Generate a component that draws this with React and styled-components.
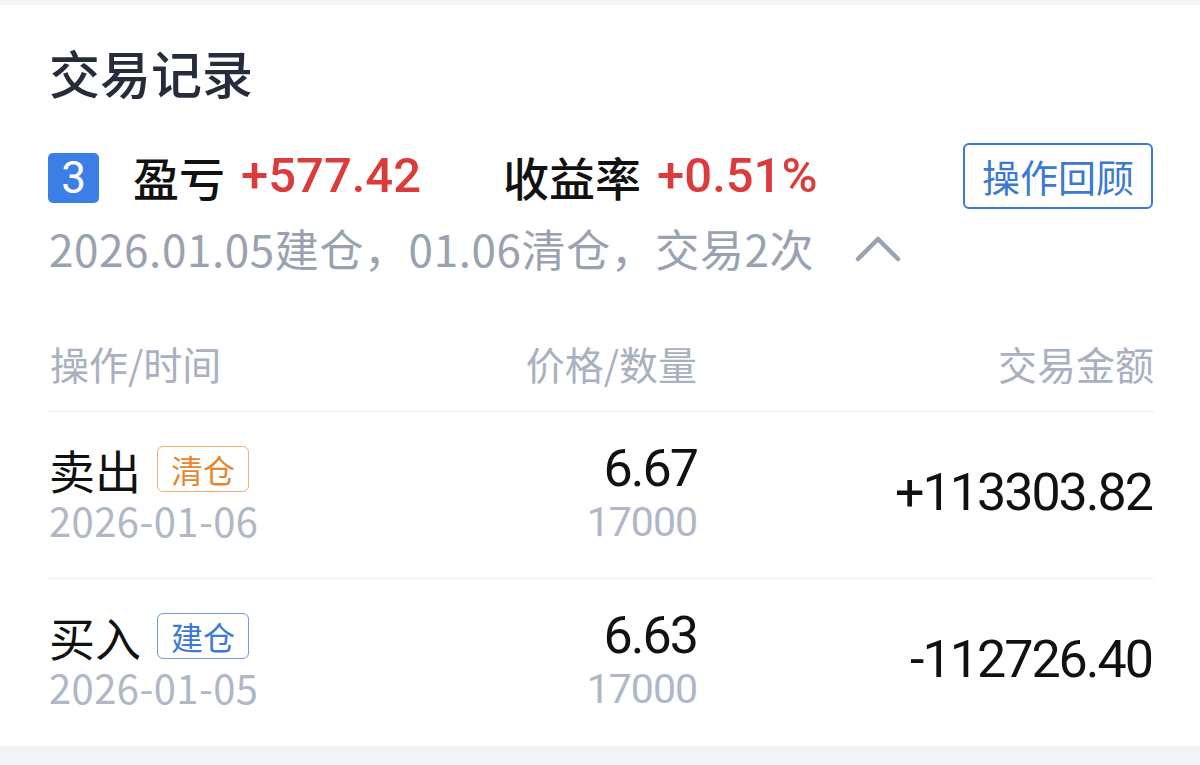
import styled, { createGlobalStyle } from "styled-components";

const GlobalStyle = createGlobalStyle`
  body {
    margin: 0;
    background: #f3f4f8;
    font-family: "Noto Sans CJK SC", "Noto Sans", sans-serif;
  }
`;

const Page = styled.div`
  padding-top: 5px;
  height: 765px;
  box-sizing: border-box;
`;

const Card = styled.div`
  background: #fff;
  height: 741px;
  box-sizing: border-box;
  padding: 41px 46px 0 48px;
`;

const Title = styled.h1`
  margin: 0 0 0 1px;
  font-size: 51px;
  line-height: 52px;
  font-weight: 500;
  color: #262c3b;
`;

const SummaryRow = styled.div`
  display: flex;
  align-items: center;
  height: 66px;
  margin-top: 45px;
`;

const Badge = styled.div`
  width: 51px;
  height: 50px;
  border-radius: 5px;
  background: #3b7fe6;
  color: #fff;
  display: flex;
  align-items: center;
  justify-content: center;
  font-family: Roboto, sans-serif;
  font-size: 44px;
  line-height: 1;
  margin-top: 4px;
`;

const Label = styled.span`
  font-size: 46px;
  line-height: 46px;
  font-weight: 500;
  color: #111;
  margin-left: ${(p) => p.$gap}px;
`;

const RedValue = styled.span`
  font-family: Roboto, "Noto Sans CJK SC", sans-serif;
  font-size: 49px;
  line-height: 48px;
  font-weight: 500;
  color: #dc3b3c;
  margin-left: 16px;
`;

const ReviewButton = styled.button`
  margin-left: auto;
  margin-right: 1px;
  height: 66px;
  padding: 0 17px;
  border: 2px solid #3b79d2;
  border-radius: 6px;
  background: #fff;
  color: #3b79d2;
  font-family: "Noto Sans CJK SC", sans-serif;
  font-size: 38px;
  line-height: 1;
`;

const DateLine = styled.div`
  display: flex;
  align-items: center;
  gap: 40px;
  margin-top: 17px;
  margin-left: 1px;
  font-size: 44px;
  line-height: 44px;
  letter-spacing: 0.6px;
  color: #9aa1b0;
`;

const TableGrid = styled.div`
  display: grid;
  grid-template-columns: 1fr 300px 457px;
  align-items: center;
`;

const HeaderRow = styled(TableGrid)`
  margin-top: 74px;
  padding-bottom: 28px;
`;

const HeadCell = styled.div`
  font-size: 39px;
  line-height: 39px;
  color: #a9b0c1;
  text-align: ${(p) => p.$align || "left"};
  margin-left: ${(p) => (p.$align ? 0 : 2)}px;
`;

const Row = styled(TableGrid)`
  height: 167px;
  box-sizing: border-box;
  padding-bottom: 4px;
  border-top: 1px solid #eceef2;
`;

const OpCell = styled.div`
  display: flex;
  flex-direction: column;
  margin-left: 1px;
`;

const OpLine = styled.div`
  display: flex;
  align-items: center;
  gap: 16px;
  height: 46px;
`;

const OpName = styled.span`
  font-size: 46px;
  line-height: 40px;
  color: #111;
`;

const Tag = styled.span`
  width: 92px;
  height: 46px;
  box-sizing: border-box;
  border: 1px solid ${(p) => p.$border};
  border-radius: 6px;
  color: ${(p) => p.$color};
  font-size: 32px;
  display: flex;
  align-items: center;
  justify-content: center;
`;

const DateText = styled.span`
  font-size: 40px;
  line-height: 40px;
  margin-top: 8px;
  letter-spacing: 0.4px;
  color: #b0b7c6;
`;

const PriceCell = styled.div`
  display: flex;
  flex-direction: column;
  align-items: flex-end;
  font-family: Roboto, sans-serif;
`;

const Price = styled.span`
  font-size: 52px;
  line-height: 52px;
  letter-spacing: -2px;
  color: #111;
`;

const Qty = styled.span`
  font-size: 41px;
  line-height: 41px;
  letter-spacing: -1px;
  margin-top: 7px;
  color: #b0b7c8;
`;

const Amount = styled.div`
  text-align: right;
  font-family: Roboto, sans-serif;
  font-size: 52px;
  line-height: 52px;
  letter-spacing: -2px;
  color: #111;
  padding-right: 2px;
`;

const Chevron = () => (
  <svg width="48" height="30" viewBox="0 0 48 30">
    <polyline
      points="4,26 24,6 44,26"
      fill="none"
      stroke="#9aa1b0"
      strokeWidth="4.5"
      strokeLinecap="round"
      strokeLinejoin="round"
    />
  </svg>
);

const trades = [
  {
    op: "卖出",
    tag: "清仓",
    tagColor: "#e8862f",
    tagBorder: "#efb07a",
    date: "2026-01-06",
    price: "6.67",
    qty: "17000",
    amount: "+113303.82",
  },
  {
    op: "买入",
    tag: "建仓",
    tagColor: "#3b79d2",
    tagBorder: "#6f9bd8",
    date: "2026-01-05",
    price: "6.63",
    qty: "17000",
    amount: "-112726.40",
  },
];

export default function App() {
  return (
    <Page>
      <GlobalStyle />
      <Card>
        <Title>交易记录</Title>
        <SummaryRow>
          <Badge>3</Badge>
          <Label $gap={34}>盈亏</Label>
          <RedValue>+577.42</RedValue>
          <Label $gap={82}>收益率</Label>
          <RedValue>+0.51%</RedValue>
          <ReviewButton>操作回顾</ReviewButton>
        </SummaryRow>
        <DateLine>
          <span>2026.01.05建仓，01.06清仓，交易2次</span>
          <Chevron />
        </DateLine>
        <HeaderRow>
          <HeadCell>操作/时间</HeadCell>
          <HeadCell $align="right">价格/数量</HeadCell>
          <HeadCell $align="right">交易金额</HeadCell>
        </HeaderRow>
        {trades.map((t) => (
          <Row key={t.date}>
            <OpCell>
              <OpLine>
                <OpName>{t.op}</OpName>
                <Tag $color={t.tagColor} $border={t.tagBorder}>
                  {t.tag}
                </Tag>
              </OpLine>
              <DateText>{t.date}</DateText>
            </OpCell>
            <PriceCell>
              <Price>{t.price}</Price>
              <Qty>{t.qty}</Qty>
            </PriceCell>
            <Amount>{t.amount}</Amount>
          </Row>
        ))}
      </Card>
    </Page>
  );
}
